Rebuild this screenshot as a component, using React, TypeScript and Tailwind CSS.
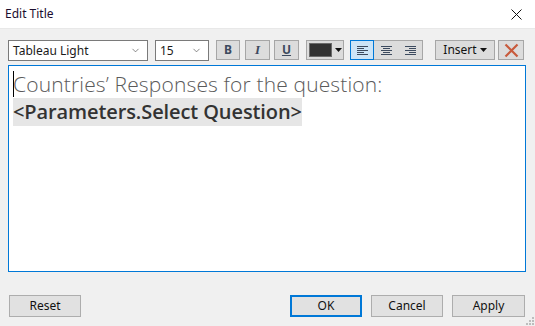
import { ChevronDown } from 'lucide-react'

// flechita negra de los botones con menú
function Caret({ className = '' }: { className?: string }) {
  return (
    <svg width="7" height="4" viewBox="0 0 7 4" className={className}>
      <path d="M0 0h7L3.5 4z" fill="#111" />
    </svg>
  )
}

function AlignIcon({ tipo }: { tipo: 'left' | 'center' | 'right' }) {
  const largas = [0, 2, 4]
  const y = [0, 2, 4, 6, 8]
  return (
    <svg width="11" height="9" viewBox="0 0 11 9">
      {y.map((yy, i) => {
        const w = largas.includes(i) ? 11 : 7
        const x = tipo === 'left' ? 0 : tipo === 'center' ? (11 - w) / 2 : 11 - w
        return <rect key={i} x={x} y={yy} width={w} height="1" fill="#3c4a5e" />
      })}
    </svg>
  )
}

function Combo({ texto, ancho }: { texto: string; ancho: string }) {
  return (
    <div className={`${ancho} h-[21px] bg-white border border-[#7a7a7a] flex items-center pl-[4px] pr-[6px] text-[12px] text-[#1a1a1a]`}>
      <span className="flex-1 leading-none">{texto}</span>
      <ChevronDown className="w-[11px] h-[11px] text-[#555]" strokeWidth={1.5} />
    </div>
  )
}

const btn = 'h-[20px] bg-[#dcdcdc] border border-[#a6a6a6] flex items-center justify-center'

export default function App() {
  return (
    <div className="w-[535px] h-[326px] bg-[#f0f0f0] flex flex-col relative overflow-hidden" style={{ fontFamily: '"Noto Sans", "Open Sans", Arial, sans-serif' }}>
      {/* barra de título */}
      <div className="h-[29px] shrink-0 bg-white border-b border-[#e8e8e8] flex items-center pl-[5px] pr-[13px]">
        <span className="flex-1 text-[12px] text-[#1a0d2e]">Edit Title</span>
        <svg width="11" height="11" viewBox="0 0 11 11">
          <path d="M0.5 0.5l10 10M10.5 0.5l-10 10" stroke="#111" strokeWidth="1" />
        </svg>
      </div>

      {/* barra de herramientas */}
      <div className="flex items-start pl-[8px] pt-[11px] h-[36px] shrink-0">
        <Combo texto="Tableau Light" ancho="w-[140px]" />
        <div className="ml-[7px]"><Combo texto="15" ancho="w-[54px]" /></div>
        <div className={`${btn} w-[24px] ml-[7px] text-[12px] font-bold text-[#3c4a5e]`}>B</div>
        <div className={`${btn} w-[25px] ml-[5px] text-[13px] font-bold italic text-[#3c4a5e]`} style={{ fontFamily: '"Liberation Serif", serif' }}>I</div>
        <div className={`${btn} w-[25px] ml-[4px] text-[12px] font-bold underline text-[#3c4a5e]`}>U</div>
        <div className={`${btn} w-[38px] ml-[7px] justify-start pl-[2px] gap-[3px]`}>
          <div className="w-[23px] h-[14px] bg-[#333333] border border-[#6b6b6b]" />
          <Caret />
        </div>
        <div className="ml-[6px] flex h-[20px] border border-[#a6a6a6] bg-[#dcdcdc]">
          <div className="w-[24px] -m-px h-[20px] bg-[#cce4f7] border border-[#0078d7] flex items-center justify-center">
            <AlignIcon tipo="left" />
          </div>
          <div className="w-[24px] ml-px flex items-center justify-center"><AlignIcon tipo="center" /></div>
          <div className="w-[24px] flex items-center justify-center"><AlignIcon tipo="right" /></div>
        </div>
        <div className={`${btn} w-[60px] ml-[12px] gap-[3px] text-[12px] text-[#111]`}>
          Insert <Caret />
        </div>
        <div className={`${btn} w-[26px] ml-[3px]`}>
          <svg width="15" height="15" viewBox="0 0 15 15">
            <path d="M1.5 1.5l12 12M13.5 1.5l-12 12" stroke="#c85a3c" strokeWidth="2.2" />
          </svg>
        </div>
      </div>

      {/* área de texto */}
      <div className="ml-[8px] w-[518px] h-[207px] shrink-0 bg-white border border-[#0078d7] pl-[4px] pt-[4px] relative">
        <div className="absolute left-[4px] top-[5px] w-px h-[26px] bg-black" />
        <div className="text-[21px] leading-[28px] font-light text-[#5a5a5a] tracking-[0.15px]" style={{ fontFamily: '"Open Sans", "Noto Sans", sans-serif' }}>
          Countries’ Responses for the question:
        </div>
        <div className="text-[20px] leading-[28px] font-semibold text-[#333] tracking-[-0.1px]" style={{ fontFamily: '"Open Sans", "Noto Sans", sans-serif' }}>
          <span className="inline-block bg-[#e6e6e6]">&lt;Parameters.Select Question&gt;</span>
        </div>
      </div>

      {/* botones inferiores */}
      <div className="flex mt-[23px] pl-[9px] pr-[10px] text-[12px] text-[#111]">
        <button className="w-[72px] h-[22px] bg-[#e1e1e1] border border-[#adadad]">Reset</button>
        <div className="flex-1" />
        <button className="w-[72px] h-[22px] bg-[#e1e1e1] border-2 border-[#0078d7]">OK</button>
        <button className="w-[72px] h-[22px] ml-[9px] bg-[#e1e1e1] border border-[#adadad]">Cancel</button>
        <button className="w-[73px] h-[22px] ml-[9px] bg-[#e1e1e1] border border-[#adadad]">Apply</button>
      </div>

      {/* grip de redimensionar */}
      <svg className="absolute right-[1px] bottom-[1px]" width="8" height="8" viewBox="0 0 8 8">
        {[[6, 0], [3, 3], [6, 3], [0, 6], [3, 6], [6, 6]].map(([x, y], i) => (
          <rect key={i} x={x} y={y} width="2" height="2" fill="#bdbdbd" />
        ))}
      </svg>
    </div>
  )
}
